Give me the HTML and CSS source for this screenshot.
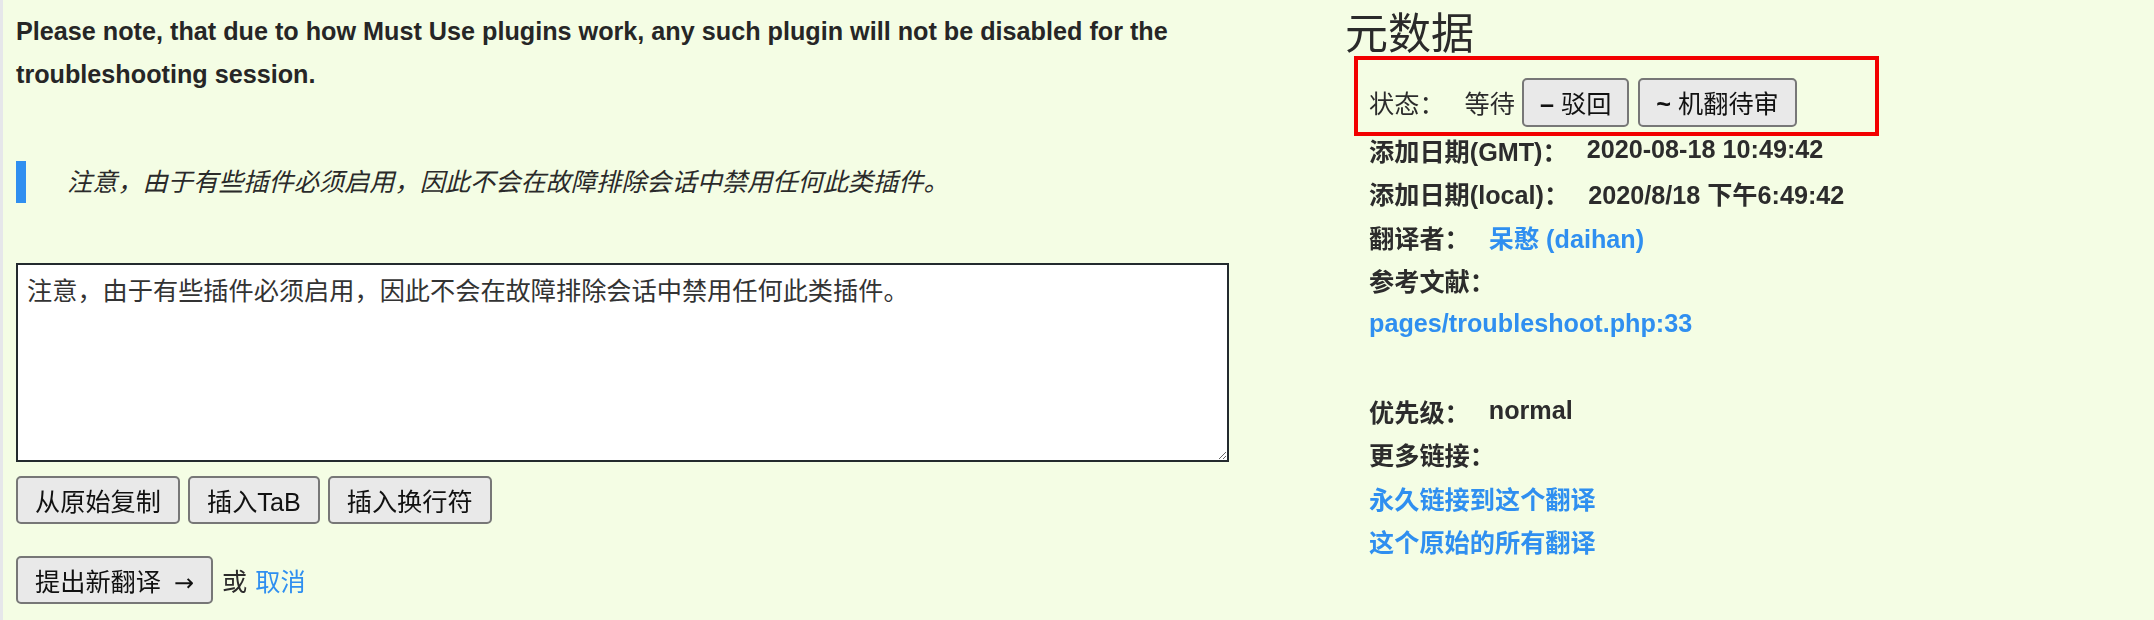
FILE: index.html
```html
<!DOCTYPE html>
<html lang="zh-CN">
<head>
  <meta charset="UTF-8">
  <meta name="viewport" content="width=device-width, initial-scale=1.0">
  <title>翻译编辑器</title>
  <link rel="stylesheet" href="styles.css">
</head>
<body>
  <div class="editor">
    <div class="strings">
      <p class="original">Please note, that due to how Must Use plugins work, any such plugin will not be disabled for the troubleshooting session.</p>
      <blockquote class="translation">注意，由于有些插件必须启用，因此不会在故障排除会话中禁用任何此类插件。</blockquote>

      <textarea class="translation-input" autofocus>注意，由于有些插件必须启用，因此不会在故障排除会话中禁用任何此类插件。</textarea>

      <div class="actions">
        <button class="btn">从原始复制</button>
        <button class="btn">插入TaB</button>
        <button class="btn">插入换行符</button>
      </div>

      <div class="submit">
        <button class="btn">提出新翻译<span class="arrow">→</span></button>
        <span class="or">或</span>
        <a href="#" class="link">取消</a>
      </div>
    </div>

    <div class="meta">
      <h3>元数据</h3>
      <div class="meta-row status-row">
        <span class="label plain">状态：</span>
        <span class="value plain">等待</span>
        <button class="btn btn-small"><b>–</b> 驳回</button>
        <button class="btn btn-small"><b>~</b> 机翻待审</button>
        <span class="highlight"></span>
      </div>
      <div class="meta-row">
        <span class="label">添加日期(GMT)：</span>
        <span class="value">2020-08-18 10:49:42</span>
      </div>
      <div class="meta-row">
        <span class="label">添加日期(local)：</span>
        <span class="value">2020/8/18 下午6:49:42</span>
      </div>
      <div class="meta-row">
        <span class="label">翻译者：</span>
        <a href="#" class="value link">呆憨 (daihan)</a>
      </div>
      <div class="meta-row">
        <span class="label">参考文献：</span>
      </div>
      <div class="meta-row">
        <a href="#" class="link">pages/troubleshoot.php:33</a>
      </div>
      <div class="meta-row empty"></div>
      <div class="meta-row">
        <span class="label">优先级：</span>
        <span class="value">normal</span>
      </div>
      <div class="meta-row">
        <span class="label">更多链接：</span>
      </div>
      <div class="meta-row">
        <a href="#" class="link">永久链接到这个翻译</a>
      </div>
      <div class="meta-row">
        <a href="#" class="link">这个原始的所有翻译</a>
      </div>
    </div>
  </div>
</body>
</html>
```

FILE: styles.css
```css
body {
  margin: 0;
  padding: 0;
  background-color: #f4fde4;
  font-family: "Liberation Sans", "Noto Sans CJK SC", sans-serif;
  color: #2c2c2c;
}

.editor {
  display: grid;
  grid-template-columns: 1213px 1fr;
  column-gap: 116px;
  border-left: 3px solid #e6e7ea;
  padding: 10px 0 0 13px;
  min-height: 610px;
}

.original {
  margin: 0;
  font-size: 25.2px;
  line-height: 43px;
  font-weight: bold;
  color: #262626;
}

.translation {
  margin: 65px 0 0;
  padding-left: 41px;
  border-left: 10px solid #2f8ff0;
  font-size: 25.2px;
  line-height: 42px;
  font-style: italic;
  color: #2a2a2a;
}

.translation-input {
  display: block;
  box-sizing: border-box;
  width: 1213px;
  height: 199px;
  margin-top: 60px;
  padding: 9px 9px;
  border: 2px solid #232a2e;
  background: #fff;
  font-family: "Liberation Sans", "Noto Sans CJK SC", sans-serif;
  font-size: 25.2px;
  line-height: 34px;
  color: #333;
}

.translation-input:focus {
  outline: none;
}

.actions {
  display: flex;
  gap: 8px;
  margin-top: 14px;
}

.submit {
  display: flex;
  align-items: center;
  margin-top: 32px;
  font-size: 25.2px;
}

.btn {
  box-sizing: border-box;
  height: 48px;
  padding: 0 17px;
  background-color: #e9e9e9;
  border: 2px solid #777;
  border-radius: 5px;
  font-family: "Liberation Sans", "Noto Sans CJK SC", sans-serif;
  font-size: 25.2px;
  color: #111;
  cursor: pointer;
}

.arrow {
  margin-left: 13px;
  font-family: "DejaVu Sans", sans-serif;
  font-size: 24px;
}

.or {
  margin: 0 8px 0 9px;
  color: #2c2c2c;
}

.link {
  color: #2f8ff0;
  text-decoration: none;
}

/* metadata column */
.meta h3 {
  margin: 0;
  font-size: 43px;
  line-height: 48px;
  font-weight: normal;
  color: #2a2a2a;
}

.meta-row {
  display: flex;
  align-items: center;
  gap: 19px;
  height: 43.5px;
  margin-left: 24px;
  font-size: 25.2px;
  font-weight: bold;
}

.status-row {
  position: relative;
  height: 52px;
  margin-top: 18px;
  gap: 0;
  font-weight: normal;
}

.status-row .value {
  margin: 0 7px 0 20px;
}

.status-row .btn-small {
  height: 49px;
  padding: 0 16px;
  margin-right: 9px;
}

/* red annotation frame around the status line */
.highlight {
  position: absolute;
  left: -15px;
  top: -20px;
  width: 525px;
  height: 80px;
  box-sizing: border-box;
  border: 4px solid #f20000;
  pointer-events: none;
}

.plain {
  font-weight: normal;
}
```
